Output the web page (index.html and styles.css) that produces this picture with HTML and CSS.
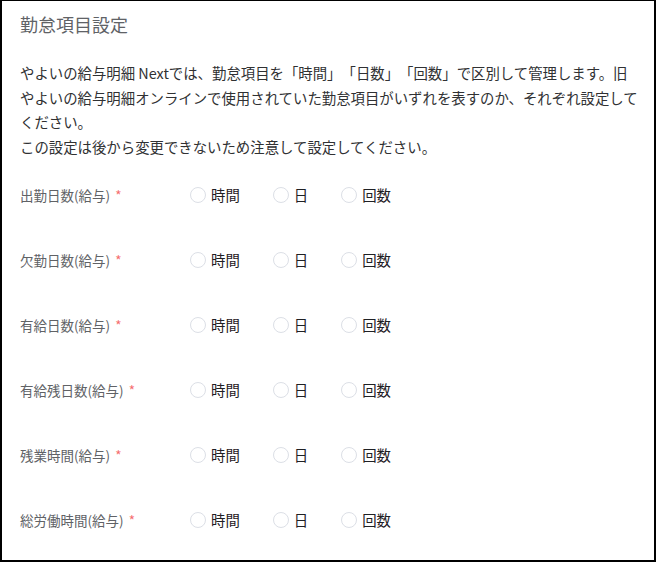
FILE: index.html
```html
<!DOCTYPE html>
<html lang="ja">
<head>
<meta charset="utf-8">
<link rel="stylesheet" href="styles.css">
</head>
<body>
<div class="page">
  <h1 class="title">勤怠項目設定</h1>
  <div class="desc">
    <p>やよいの給与明細 Nextでは、勤怠項目を「時間」「日数」「回数」で区別して管理します。旧やよいの給与明細オンラインで使用されていた勤怠項目がいずれを表すのか、それぞれ設定してください。</p>
    <p>この設定は後から変更できないため注意して設定してください。</p>
  </div>
  <div class="form">
    <div class="row"><div class="label">出勤日数(給与)<span class="req">*</span></div>
      <div class="group"><label class="radio"><span class="dot"></span><span class="rl">時間</span></label><label class="radio"><span class="dot"></span><span class="rl">日</span></label><label class="radio"><span class="dot"></span><span class="rl">回数</span></label></div></div>
    <div class="row"><div class="label">欠勤日数(給与)<span class="req">*</span></div>
      <div class="group"><label class="radio"><span class="dot"></span><span class="rl">時間</span></label><label class="radio"><span class="dot"></span><span class="rl">日</span></label><label class="radio"><span class="dot"></span><span class="rl">回数</span></label></div></div>
    <div class="row"><div class="label">有給日数(給与)<span class="req">*</span></div>
      <div class="group"><label class="radio"><span class="dot"></span><span class="rl">時間</span></label><label class="radio"><span class="dot"></span><span class="rl">日</span></label><label class="radio"><span class="dot"></span><span class="rl">回数</span></label></div></div>
    <div class="row"><div class="label">有給残日数(給与)<span class="req">*</span></div>
      <div class="group"><label class="radio"><span class="dot"></span><span class="rl">時間</span></label><label class="radio"><span class="dot"></span><span class="rl">日</span></label><label class="radio"><span class="dot"></span><span class="rl">回数</span></label></div></div>
    <div class="row"><div class="label">残業時間(給与)<span class="req">*</span></div>
      <div class="group"><label class="radio"><span class="dot"></span><span class="rl">時間</span></label><label class="radio"><span class="dot"></span><span class="rl">日</span></label><label class="radio"><span class="dot"></span><span class="rl">回数</span></label></div></div>
    <div class="row"><div class="label">総労働時間(給与)<span class="req">*</span></div>
      <div class="group"><label class="radio"><span class="dot"></span><span class="rl">時間</span></label><label class="radio"><span class="dot"></span><span class="rl">日</span></label><label class="radio"><span class="dot"></span><span class="rl">回数</span></label></div></div>
  </div>
</div>
</body>
</html>
```
FILE: styles.css
```css
* { box-sizing: border-box; }
html, body { margin: 0; padding: 0; background: #fff; }
body {
  font-family: "Noto Sans CJK JP", "Noto Sans", sans-serif;
  color: #303133;
  text-spacing-trim: space-all;
}
.page {
  width: 656px;
  height: 562px;
  border-top: 1px solid #000;
  border-left: 2px solid #000;
  border-right: 2px solid #000;
  border-bottom: 2px solid #000;
  padding: 0 16px 0 18px;
  overflow: hidden;
}
.title {
  margin: 11px 0 0 0;
  font-size: 18px;
  font-weight: normal;
  line-height: 24px;
  color: #606266;
}
.desc {
  margin-top: 25px;
  font-size: 14.4px;
  line-height: 24.5px;
  color: #303133;
}
.desc p { margin: 0; }
.form { margin-top: 3px; }
.row {
  display: flex;
  align-items: center;
  height: 65px;
}
.label {
  width: 170px;
  font-size: 13.5px;
  color: #606266;
}
.req { color: #f56c6c; margin-left: 5px; }
.group { display: flex; align-items: center; }
.radio {
  display: flex;
  align-items: center;
  margin-right: 33px;
  font-size: 14.4px;
  color: #1f2024;
}
.dot {
  width: 16px;
  height: 16px;
  border: 1px solid #dcdfe6;
  border-radius: 50%;
  background: #fff;
}
.rl { padding-left: 5px; }
```
